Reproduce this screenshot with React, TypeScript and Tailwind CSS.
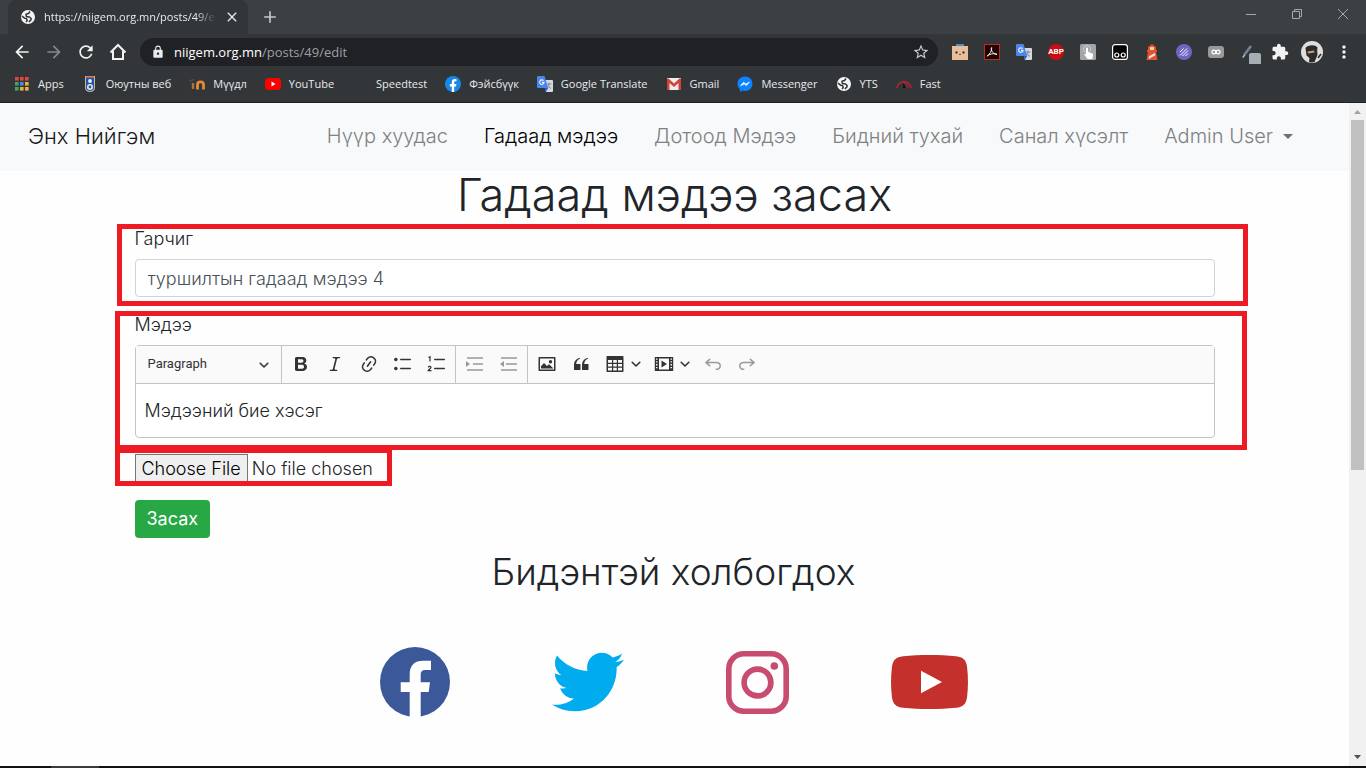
import type { ReactNode } from "react";
import {
  MdArrowBack,
  MdArrowForward,
  MdRefresh,
  MdLock,
  MdStarOutline,
  MdExtension,
  MdMoreVert,
  MdClose,
  MdAdd,
} from "react-icons/md";
import { FaTwitter } from "react-icons/fa";

const ui = "font-['Open_Sans','Noto_Sans',sans-serif]";

function TranslateIcon() {
  return (
    <svg viewBox="0 0 16 16" className="size-4" aria-hidden="true">
      <path d="M6 4h9a1 1 0 0 1 1 1v10a1 1 0 0 1-1 1H9z" fill="#d5dae0" />
      <path d="M9.5 8h5M12 6.8V8c0 2-1 3.500-2 4.200M10.800 9.500c.6 1.300 1.700 2.300 3.200 2.900" stroke="#7b8b9a" strokeWidth="1" fill="none" />
      <path d="M1 0h6.500l3.700 12H1a1 1 0 0 1-1-1V1a1 1 0 0 1 1-1z" fill="#4a86ee" />
      <path d="M7.600 12h3.600L9 15.800z" fill="#2f5fc0" />
      <path d="M6.500 4.700A2.200 2.200 0 1 0 7 6.400H5" stroke="#e8f0fe" strokeWidth="1.100" fill="none" />
    </svg>
  );
}

function AppsIcon() {
  const colors = ["#e0483e", "#e0483e", "#e0483e", "#43a563", "#4a86ee", "#e8b33a", "#43a563", "#e8b33a", "#e8b33a"];
  return (
    <svg viewBox="0 0 16 16" className="size-4" aria-hidden="true">
      {colors.map((c, i) => (
        <rect key={i} x={1 + (i % 3) * 5} y={1 + Math.floor(i / 3) * 5} width="3.600" height="3.600" fill={c} />
      ))}
    </svg>
  );
}

function CrestIcon() {
  return (
    <svg viewBox="0 0 16 16" className="size-4" aria-hidden="true">
      <path d="M3 0h10v12c0 2-2 4-5 4s-5-2-5-4z" fill="#c7b98a" />
      <path d="M4 1.500h8V12c0 1.500-1.500 3-4 3s-4-1.500-4-3z" fill="#2456a5" />
      <path d="M4 .5h8v1.200H4z" fill="#c94b3c" />
      <circle cx="8" cy="5" r="1.900" fill="#e8eefc" />
      <circle cx="8" cy="11" r="3" fill="#dfe8f5" />
      <circle cx="8" cy="11" r="1.400" fill="#2456a5" />
    </svg>
  );
}

function MoodleIcon() {
  return (
    <svg viewBox="0 0 16 16" className="size-4" aria-hidden="true" fill="none">
      <path d="M0 5l5-1.500" stroke="#5b4a3c" strokeWidth="1.600" />
      <path d="M4 13V7" stroke="#b0713a" strokeWidth="2.400" />
      <path d="M8.500 13.500V8.300c0-3.300 6-3.300 6 0v5.200" stroke="#e28b35" strokeWidth="2.800" />
    </svg>
  );
}

function YoutubeMini() {
  return (
    <svg viewBox="0 0 16 16" className="size-4" aria-hidden="true">
      <rect x="0" y="2" width="16" height="12" rx="3.500" fill="#f00" />
      <path d="M6.500 5.600v4.800L10.500 8z" fill="#fff" />
    </svg>
  );
}

function FacebookMini() {
  return (
    <svg viewBox="0 0 16 16" className="size-4" aria-hidden="true">
      <circle cx="8" cy="8" r="8" fill="#1787e8" />
      <path d="M6.800 16v-5.600h-2V8h2V6.300c0-2.100 1.200-3.200 3-3.200l1.700.1v2h-1c-1 0-1.300.6-1.300 1.300V8h2.200l-.4 2.400H9.200V16z" fill="#fff" />
    </svg>
  );
}

function GmailIcon() {
  return (
    <svg viewBox="0 0 16 16" className="size-4" aria-hidden="true">
      <rect x="1" y="2" width="14" height="12" fill="#f1eded" />
      <path d="M1 14V2.500h1.500L8 7.500l5.500-5H15V14h-2.500V7L8 11 3.500 7v7z" fill="#d0423a" />
    </svg>
  );
}

function MessengerIcon() {
  return (
    <svg viewBox="0 0 16 16" className="size-4" aria-hidden="true">
      <path d="M8 .5C3.700.5.500 3.600.5 7.700c0 2.200.9 4 2.400 5.300V16l2.500-1.400c.8.200 1.700.3 2.600.3 4.300 0 7.500-3.100 7.500-7.200S12.300.5 8 .5z" fill="#0a84ff" />
      <path d="M3.500 9.800l3-3.500L8.800 8l3.700-1.900-3.100 3.500L7.200 8z" fill="#fff" stroke="#fff" strokeWidth=".6" />
    </svg>
  );
}

function FastIcon() {
  return (
    <svg viewBox="0 0 16 16" className="size-4" aria-hidden="true" fill="none">
      <path d="M.8 12A7.300 7.300 0 0 1 15.300 12" stroke="#c2222f" strokeWidth="1.300" />
      <path d="M4 6.500a7 7 0 0 1 9 5.500M7 6.500c3 .5 4 3 4 5.500" stroke="#b3202c" strokeWidth="1" />
      <path d="M7 12l.5-5 2 5z" fill="#0b0b0b" />
    </svg>
  );
}

function GlobeIcon() {
  return (
    <svg viewBox="0 0 16 16" className="size-4 shrink-0" aria-hidden="true">
      <circle cx="8" cy="8" r="7" fill="#f4f5f6" />
      <path
        d="M10 2.500L8.500 4.500 6 5.300l.3 2.200 3.200.5 1.700 1.500-.4 1.700-2 1.600M2 7.200l2.500 2 2 .4.700 1.600-1 2"
        fill="none"
        stroke="#323639"
        strokeWidth="1.500"
        strokeLinejoin="round"
      />
    </svg>
  );
}

const bookmarks: { label: string; icon: ReactNode }[] = [
  { label: "Apps", icon: <AppsIcon /> },
  { label: "Оюутны веб", icon: <CrestIcon /> },
  { label: "Мүүдл", icon: <MoodleIcon /> },
  { label: "YouTube", icon: <YoutubeMini /> },
  { label: "Speedtest", icon: <span className="size-4" /> },
  { label: "Фэйсбүүк", icon: <FacebookMini /> },
  { label: "Google Translate", icon: <TranslateIcon /> },
  { label: "Gmail", icon: <GmailIcon /> },
  { label: "Messenger", icon: <MessengerIcon /> },
  { label: "YTS", icon: <GlobeIcon /> },
  { label: "Fast", icon: <FastIcon /> },
];

const extensions: { name: string; icon: ReactNode }[] = [
  {
    name: "Box",
    icon: (
      <svg viewBox="0 0 16 16" className="size-4">
        <rect x="4" y="0" width="8" height="3" fill="#4a90c8" />
        <rect y="2" width="16" height="14" fill="#e6bf98" />
        <path d="M3.500 7.500h2v2h-2zM10.500 7.500h2v2h-2z" fill="#222" />
        <path d="M7 10.500h2" stroke="#a33" />
      </svg>
    ),
  },
  {
    name: "Acrobat",
    icon: (
      <svg viewBox="0 0 16 16" className="size-4">
        <rect x=".5" y=".5" width="15" height="15" fill="#1e0303" stroke="#c12a20" />
        <path d="M3 12.200c2.500-1.500 5-5.500 4.800-8.700-.8 0-.8 2 0 3.500 1 2 3 3.800 5.200 3.500.4-1.200-5-1.300-8.200.4C3.500 11.500 3 12.200 3 12.200z" fill="none" stroke="#f2e9e9" />
      </svg>
    ),
  },
  { name: "Translate", icon: <TranslateIcon /> },
  {
    name: "Adblock Plus",
    icon: (
      <span className="flex size-4 items-center justify-center rounded-full bg-[#c70d12] font-['Roboto',sans-serif] text-[8px] font-bold text-white">
        ABP
      </span>
    ),
  },
  {
    name: "Clicker",
    icon: (
      <svg viewBox="0 0 16 16" className="size-4">
        <rect width="16" height="16" rx="1.500" fill="#a3a5a7" />
        <circle cx="7" cy="5" r="3.500" fill="none" stroke="#c9cbcd" />
        <path d="M6 4.500c0-1.300 2-1.300 2 0V8l4 1.200c1 .3 1.200 1 1 2L12.300 15H7.500L4.500 11c-.5-.8.3-1.500 1.500-.5z" fill="#fff" />
      </svg>
    ),
  },
  {
    name: "Monkey",
    icon: (
      <svg viewBox="0 0 16 16" className="size-4" fill="none">
        <rect x=".6" y=".6" width="14.800" height="14.800" rx="2.500" fill="#000" stroke="#fff" strokeWidth="1.200" />
        <circle cx="4.800" cy="11" r="2" stroke="#fff" strokeWidth="1.200" />
        <circle cx="11.200" cy="11" r="2" stroke="#fff" strokeWidth="1.200" />
      </svg>
    ),
  },
  {
    name: "Lighthouse",
    icon: (
      <svg viewBox="0 0 16 16" className="size-4">
        <path d="M8 0l4 3v3h1v2h-1l1.500 8h-11L4 8H3V6h1V3z" fill="#e0532b" />
        <rect x="6" y="3" width="4" height="3" fill="#f6cf9b" />
        <path d="M5 12.200l6-3.200.4 2.200L4.600 15z" fill="#f3e6dc" />
      </svg>
    ),
  },
  {
    name: "Purple",
    icon: (
      <svg viewBox="0 0 16 16" className="size-4">
        <circle cx="8" cy="8" r="8" fill="#7064c4" />
        <path d="M4 8l3.500-3.500M4 11.500L11 4.500M6.500 12L12 6.500M9.500 12l2.500-2.500" stroke="#fff" />
      </svg>
    ),
  },
  {
    name: "Loop",
    icon: (
      <svg viewBox="0 0 16 16" className="size-4" fill="none">
        <rect y="2" width="16" height="12" rx="3" fill="#98999b" />
        <circle cx="5.900" cy="8" r="1.900" stroke="#fff" strokeWidth="1.200" />
        <circle cx="10.100" cy="8" r="1.900" stroke="#fff" strokeWidth="1.200" />
      </svg>
    ),
  },
  {
    name: "Color picker",
    icon: (
      <svg viewBox="0 0 20 24" className="ml-1.5 h-6 w-5">
        <path d="M3.500 14.500L10 6" stroke="#6e8496" strokeWidth="2.600" />
        <path d="M1.800 17.500l2-3" stroke="#b9c4cc" strokeWidth="1.400" />
        <rect x="8" y="13" width="12" height="12" rx="2" fill="#a7adb5" />
      </svg>
    ),
  },
  { name: "Extensions", icon: <MdExtension className="size-[18px] text-[#f1f3f4]" /> },
  {
    name: "Profile",
    icon: (
      <svg viewBox="0 0 22 22" className="size-[22px]">
        <circle cx="11" cy="11" r="11" fill="#dedede" />
        <path d="M4.500 7c2-3 9.500-4 12-.5l-.3 3 .3 4.500-3 7c-2 .6-4 .6-5.500 0l.5-4-3-2.500z" fill="#2d2b2a" />
        <path d="M6.500 10.500l6.500-1 .6 2-6.500 1z" fill="#c49a80" />
        <path d="M17 17l3-4" stroke="#2d2b2a" strokeWidth="1.500" />
      </svg>
    ),
  },
  { name: "Menu", icon: <MdMoreVert className="size-5 text-[#f1f3f4]" /> },
];

function BrowserChrome() {
  return (
    <header className={`${ui} border-b border-[#1f2124] bg-[#323639] text-[#e8eaed]`}>
      <div className="flex h-[34px] bg-[#3c4043] pl-2">
        <div className="flex w-60 items-center gap-2 rounded-t-lg bg-[#323639] pr-2 pl-3 text-[11px]">
          <GlobeIcon />
          <span className="min-w-0 flex-1 overflow-hidden whitespace-nowrap [mask-image:linear-gradient(to_right,#000_88%,transparent)]">
            https://niigem.org.mn/posts/49/edit
          </span>
          <button aria-label="Close tab">
            <MdClose className="size-4" />
          </button>
        </div>
        <button aria-label="New tab" className="ml-3">
          <MdAdd className="size-5 text-[#c4c7ca]" />
        </button>
        <div className="ml-auto flex pb-1.5 text-[#a5a8aa]">
          <button aria-label="Minimize" className="flex w-[46px] items-center justify-center">
            <svg viewBox="0 0 10 10" className="size-2.5" fill="none" stroke="currentColor">
              <path d="M0 5.500h10" />
            </svg>
          </button>
          <button aria-label="Restore" className="flex w-[46px] items-center justify-center">
            <svg viewBox="0 0 10 10" className="size-2.5" fill="none" stroke="currentColor">
              <path d="M.5 2.500h7v7h-7zM2.500 2.500v-2h7v7h-2" />
            </svg>
          </button>
          <button aria-label="Close" className="flex w-[46px] items-center justify-center">
            <svg viewBox="0 0 10 10" className="size-2.5" fill="none" stroke="currentColor">
              <path d="M0 0l10 10M10 0L0 10" />
            </svg>
          </button>
        </div>
      </div>

      <div className="flex h-9 items-center px-1.5">
        <button aria-label="Back" className="flex w-8 justify-center">
          <MdArrowBack className="size-5 text-[#f1f3f4]" />
        </button>
        <button aria-label="Forward" className="flex w-8 justify-center">
          <MdArrowForward className="size-5 text-[#85888b]" />
        </button>
        <button aria-label="Reload" className="flex w-8 justify-center">
          <MdRefresh className="size-5 text-[#f1f3f4]" />
        </button>
        <button aria-label="Home" className="flex w-8 justify-center">
          <svg viewBox="0 0 20 20" className="size-5" fill="none" stroke="#f1f3f4" strokeWidth="2">
            <path d="M2.500 10.500L10 3l7.500 7.500M5 9v8h10V9" />
          </svg>
        </button>
        <div className="mx-1.5 flex h-7 flex-1 items-center rounded-full bg-[#202124] pr-2 pl-[11px]">
          <MdLock className="size-3.5 shrink-0 text-[#e8eaed]" />
          <span className="flex-1 pt-px pl-[9px] text-[13px] whitespace-nowrap text-[#9aa0a6]">
            <span className="text-white">niigem.org.mn</span>/posts/49/edit
          </span>
          <button aria-label="Bookmark this page">
            <MdStarOutline className="size-[18px] text-[#c4c7ca]" />
          </button>
        </div>
        {extensions.map((e) => (
          <button key={e.name} aria-label={e.name} className="flex w-8 items-center justify-center">
            {e.icon}
          </button>
        ))}
      </div>

      <nav aria-label="Bookmarks" className="flex h-8 items-center gap-[18px] pb-1 pl-3.5 text-[11px]">
        {bookmarks.map((b) => (
          <a key={b.label} href="#" className="flex items-center gap-2 whitespace-nowrap">
            {b.icon}
            {b.label}
          </a>
        ))}
      </nav>
    </header>
  );
}

const navLinks = ["Нүүр хуудас", "Гадаад мэдээ", "Дотоод Мэдээ", "Бидний тухай", "Санал хүсэлт"];

function SiteNav() {
  return (
    <nav className="flex h-[68px] items-center justify-between bg-[#f8f9fa] pr-14 pb-0.5 pl-7">
      <a href="#" className="text-[22px] text-[#1a1a1a]">
        Энх Нийгэм
      </a>
      <div className="flex items-center gap-9 text-xl text-[#808182]">
        {navLinks.map((l) => (
          <a key={l} href="#" className={l === "Гадаад мэдээ" ? "text-black" : ""}>
            {l}
          </a>
        ))}
        <button className="flex items-center gap-2.5">
          Admin User
          <svg viewBox="0 0 10 5" className="w-2.5" fill="#6f7071">
            <path d="M0 0h10L5 5z" />
          </svg>
        </button>
      </div>
    </nav>
  );
}

function Svg({ children }: { children: ReactNode }) {
  return (
    <svg viewBox="0 0 20 20" className="size-5" fill="currentColor" aria-hidden="true">
      {children}
    </svg>
  );
}

function Chevron() {
  return (
    <svg viewBox="0 0 10 10" className="size-2.5" fill="none" stroke="#333" strokeWidth="1.600" strokeLinecap="round" strokeLinejoin="round" aria-hidden="true">
      <path d="M1.200 3.300L5 7l3.800-3.700" />
    </svg>
  );
}

function Tool({ label, disabled, menu, children }: { label: string; disabled?: boolean; menu?: boolean; children: ReactNode }) {
  return (
    <button
      type="button"
      aria-label={label}
      disabled={disabled}
      className={`flex items-center pb-0.5 pl-2 ${menu ? "w-[49px] gap-1.5" : "w-[34px]"} ${disabled ? "text-[#999]" : "text-[#333]"}`}
    >
      <Svg>{children}</Svg>
      {menu && <Chevron />}
    </button>
  );
}

const undoPath =
  "M5.042 9.367l2.189 1.837a.75.75 0 0 1-.965 1.149l-3.788-3.180a.747.747 0 0 1-.210-.284.750.750 0 0 1 .170-.945L6.230 4.762a.750.750 0 1 1 .964 1.150L4.863 7.866h8.917A.750.750 0 0 1 14 7.900a4 4 0 1 1-1.477 7.718l.344-1.489a2.500 2.500 0 1 0 1.094-4.730l.008-.032H5.042z";

function Editor() {
  const group = "flex border-l border-[#c4c4c4] pr-0.5 pl-px";
  return (
    <div className="rounded-sm border border-[#c4c4c4] bg-white">
      <div role="toolbar" aria-label="Editor toolbar" className="flex h-[38px] border-b border-[#c4c4c4] bg-[#fafafa]">
        <div className="relative flex w-[145px] items-center">
          <select
            aria-label="Heading"
            className="h-full w-full appearance-none bg-transparent pl-3 font-['Roboto',sans-serif] text-[13px] font-normal text-[#333]"
          >
            <option>Paragraph</option>
          </select>
          <span className="pointer-events-none absolute right-3">
            <Chevron />
          </span>
        </div>
        <div className={group}>
          <Tool label="Bold">
            <path d="M10.187 17H5.773c-.637 0-1.092-.138-1.364-.415-.273-.277-.409-.718-.409-1.323V4.738c0-.617.14-1.062.419-1.332.279-.27.73-.406 1.354-.406h4.680c.69 0 1.288.041 1.793.124.506.083.96.242 1.360.478.341.197.644.447.906.75a3.262 3.262 0 0 1 .808 2.162c0 1.401-.722 2.426-2.167 3.075C15.050 10.175 16 11.315 16 13.010a3.756 3.756 0 0 1-2.296 3.504 6.100 6.100 0 0 1-1.517.377c-.571.073-1.238.11-2 .11zm-.217-6.217H7v4.087h3.069c1.977 0 2.965-.69 2.965-2.072 0-.707-.256-1.220-.768-1.537-.512-.319-1.277-.478-2.296-.478zM7 5.130v3.619h2.606c.729 0 1.292-.067 1.690-.2a1.600 1.600 0 0 0 .91-.765c.165-.267.247-.566.247-.897 0-.707-.26-1.176-.778-1.409-.519-.232-1.310-.348-2.375-.348H7z" />
          </Tool>
          <Tool label="Italic">
            <path d="M9.586 14.633l.021.004c-.036.335.095.655.393.962.082.083.173.15.274.201h1.474a.6.6 0 1 1 0 1.200H5.304a.6.6 0 0 1 0-1.200h1.150c.474-.07.809-.182 1.005-.334.157-.122.291-.32.404-.597l2.416-9.550a1.053 1.053 0 0 0-.281-.823 1.120 1.120 0 0 0-.442-.296H8.150a.6.6 0 0 1 0-1.200h6.443a.6.6 0 1 1 0 1.200h-1.195c-.376.056-.65.155-.823.296-.215.175-.423.439-.623.79l-2.366 9.347z" />
          </Tool>
          <Tool label="Link">
            <path d="M11.077 15l.991-1.416a.75.75 0 1 1 1.229.86l-1.148 1.640a.748.748 0 0 1-.217.206 5.251 5.251 0 0 1-8.503-5.955.741.741 0 0 1 .12-.274l1.147-1.639a.75.75 0 1 1 1.228.86L4.933 10.700l.006.003a3.750 3.750 0 0 0 6.132 4.294l.006.004zm5.494-5.335a.748.748 0 0 1-.12.274l-1.147 1.639a.75.75 0 1 1-1.228-.86l.86-1.230a3.750 3.750 0 0 0-6.144-4.301l-.86 1.229a.75.75 0 0 1-1.229-.86l1.148-1.640a.748.748 0 0 1 .217-.206 5.251 5.251 0 0 1 8.503 5.955zm-4.563-2.532a.75.75 0 0 1 .184 1.045l-3.155 4.505a.75.75 0 1 1-1.229-.86l3.155-4.506a.75.75 0 0 1 1.045-.184z" />
          </Tool>
          <Tool label="Bulleted list">
            <circle cx="2.800" cy="5.500" r="1.750" />
            <circle cx="2.800" cy="14.500" r="1.750" />
            <rect x="7" y="4.750" width="11" height="1.500" rx=".75" />
            <rect x="7" y="13.750" width="11" height="1.500" rx=".75" />
          </Tool>
          <Tool label="Numbered list">
            <rect x="7" y="4.750" width="11" height="1.500" rx=".75" />
            <rect x="7" y="13.750" width="11" height="1.500" rx=".75" />
            <path d="M1.500 3.500L3 2.700V7.500M1.300 13.300c.3-1.200 2.900-1.200 2.700.2-.1.900-2 1.500-2.700 3.100h3.200" fill="none" stroke="currentColor" strokeWidth="1.200" />
          </Tool>
        </div>
        <div className={group}>
          <Tool label="Increase indent" disabled>
            <path d="M2 3.250h16v1.500H2zM8 9.250h10v1.500H8zM2 15.250h16v1.500H2zM1 7v6l4-3z" />
          </Tool>
          <Tool label="Decrease indent" disabled>
            <path d="M2 3.250h16v1.500H2zM7 9.250h11v1.500H7zM2 15.250h16v1.500H2zM5 7v6l-4-3z" />
          </Tool>
        </div>
        <div className={group}>
          <Tool label="Insert image">
            <path fillRule="evenodd" d="M2.500 3h15c.6 0 1 .4 1 1v12c0 .6-.4 1-1 1h-15c-.6 0-1-.4-1-1V4c0-.6.4-1 1-1zM3 4.500v11h14v-11zM4 14.500v-2.200l3-3.300 3 3 2-1.700 4 3.700v.5zM13.500 6a1.700 1.700 0 1 1 0 3.400 1.700 1.700 0 0 1 0-3.400z" />
          </Tool>
          <Tool label="Block quote">
            <path d="M3 10.423a6.500 6.500 0 0 1 6.056-6.408l.038.670C6.448 5.423 5.354 7.663 5.220 10H9c.552 0 .5.432.5.986v4.511c0 .554-.448.503-1 .503h-5c-.552 0-.5-.449-.5-1.003v-4.574zm8 0a6.500 6.500 0 0 1 6.056-6.408l.038.670c-2.646.739-3.740 2.979-3.873 5.315H17c.552 0 .5.432.5.986v4.511c0 .554-.448.503-1 .503h-5c-.552 0-.5-.449-.5-1.003v-4.574z" />
          </Tool>
          <Tool label="Insert table" menu>
            <path fillRule="evenodd" d="M2.500 2h15c.6 0 1 .4 1 1v14c0 .6-.4 1-1 1h-15c-.6 0-1-.4-1-1V3c0-.6.4-1 1-1zM3 6v2.700h4V6zM8.200 6v2.700h3.600V6zM13 6v2.700h4V6zM3 9.900v2.700h4V9.900zM8.200 9.900v2.700h3.600V9.900zM13 9.900v2.700h4V9.900zM3 13.800v2.700h4v-2.700zM8.200 13.800v2.700h3.600v-2.700zM13 13.800v2.700h4v-2.700z" />
          </Tool>
          <Tool label="Insert media" menu>
            <path fillRule="evenodd" d="M.8 3h18.400v14H.8zM5 4.500v11h10v-11zM2 4.500v1.300h1.500V4.500zM2 7.300v1.300h1.500V7.300zM2 10.100v1.300h1.500v-1.300zM2 12.900v1.300h1.500v-1.300zM16.500 4.500v1.300H18V4.500zM16.500 7.300v1.300H18V7.300zM16.500 10.100v1.300H18v-1.300zM16.500 12.900v1.300H18v-1.300zM7.500 6.500v7L13 10z" />
          </Tool>
          <Tool label="Undo" disabled>
            <path d={undoPath} />
          </Tool>
          <Tool label="Redo" disabled>
            <g transform="matrix(-1 0 0 1 20 0)">
              <path d={undoPath} />
            </g>
          </Tool>
        </div>
      </div>
      <div contentEditable suppressContentEditableWarning role="textbox" aria-label="Мэдээ" className="px-[9px] py-[14px] leading-[25px] text-[#212529]">
        Мэдээний бие хэсэг
      </div>
    </div>
  );
}

function Highlight({ className }: { className: string }) {
  return <div aria-hidden="true" className={`pointer-events-none absolute border-5 border-[#ed1c24] ${className}`} />;
}

function SocialLinks() {
  return (
    <section className="pt-[15px] pr-0.5">
      <h2 className="text-center text-[37px] leading-[38px]">Бидэнтэй холбогдох</h2>
      <div className="mt-[55px] flex items-center justify-center gap-[102px]">
        <a href="#" aria-label="Facebook">
          <svg viewBox="0 0 70 70" className="size-[70px]">
            <circle cx="35" cy="35" r="35" fill="#3b5998" />
            <path d="M29.700 70V45h-9v-9.700h9V27c0-9 5.300-13.300 13.300-13.300h8V23h-6c-3 0-4.300 1.500-4.300 4.500v7.800H50L48.700 45h-8v25z" fill="#fff" />
          </svg>
        </a>
        <a href="#" aria-label="Twitter">
          <FaTwitter className="size-[72px] text-[#00aced]" />
        </a>
        <a href="#" aria-label="Instagram">
          <svg viewBox="0 0 63 63" className="size-[63px]" fill="none" stroke="#c84b70" strokeWidth="5.600">
            <rect x="2.800" y="2.800" width="57.400" height="57.400" rx="15" />
            <circle cx="31.500" cy="31.500" r="13.400" />
            <circle cx="48.300" cy="15" r="3.800" fill="#c84b70" stroke="none" />
          </svg>
        </a>
        <a href="#" aria-label="YouTube">
          <svg viewBox="0 0 77 54" className="h-[54px] w-[77px]">
            <path d="M12 1.200C28-.400 49-.400 65 1.200c7 .7 10 3.800 11 10.300 1.300 10 1.300 21 0 31-1 6.500-4 9.600-11 10.300-16 1.600-37 1.600-53 0-7-.7-10-3.800-11-10.300-1.300-10-1.300-21 0-31C2 5 5 1.900 12 1.200z" fill="#c4302b" />
            <path d="M30 15.700v22.600L51 27z" fill="#fff" />
          </svg>
        </a>
      </div>
    </section>
  );
}

export default function App() {
  return (
    <div className="flex min-h-screen flex-col">
      <BrowserChrome />
      <div className="flex flex-1 bg-[#fefefe]">
        <div className="min-w-0 flex-1 font-['Inter','Noto_Sans',sans-serif] font-light text-[#212529]" lang="mn">
          <SiteNav />
          <main className="mx-auto max-w-[1080px] text-lg">
            <h1 className="text-center text-[45px] leading-[48px]">Гадаад мэдээ засах</h1>
            <form className="mt-2 flex flex-col items-start gap-4">
              <div className="relative flex w-full flex-col gap-2">
                <label htmlFor="title" className="leading-6">
                  Гарчиг
                </label>
                <input
                  id="title"
                  type="text"
                  defaultValue="туршилтын гадаад мэдээ 4"
                  className="h-[38px] w-full rounded border border-[#ced4da] bg-white px-3 text-[#495057]"
                />
                <Highlight className="-top-[3px] -right-[33px] -bottom-[9px] -left-[18px]" />
              </div>
              <div className="relative flex w-full flex-col gap-2">
                <span className="leading-6">Мэдээ</span>
                <Editor />
                <Highlight className="-top-0.5 -right-8 -bottom-3 -left-5" />
              </div>
              <div className="relative h-[30px]">
                <input
                  type="file"
                  aria-label="Файл"
                  className="h-[30px] w-60 file:mr-1 file:h-[30px] file:border file:border-[#767676] file:bg-[#efefef] file:px-1.5 file:font-light file:text-black"
                />
                <Highlight className="-top-1.5 -right-[17px] -bottom-0.5 -left-5" />
              </div>
              <button type="submit" className="h-[38px] rounded bg-[#28a745] px-3 font-normal text-white">
                Засах
              </button>
            </form>
            <SocialLinks />
          </main>
        </div>
        <div aria-hidden="true" className="flex w-[17px] flex-col items-center bg-[#f1f1f1]">
          <svg viewBox="0 0 17 17" className="size-[17px]">
            <path d="M5 11h7L8.500 7z" fill="#a3a3a3" />
          </svg>
          <div className="w-[13px] flex-1">
            <div className="h-[350px] bg-[#c1c1c1]" />
          </div>
          <svg viewBox="0 0 17 17" className="size-[17px]">
            <path d="M5 6h7l-3.500 4z" fill="#505050" />
          </svg>
        </div>
      </div>
      <footer className="h-0.5 bg-[#101214] pl-[51px]">
        <div className="h-0.5 w-12 bg-[#3a3c3d]" />
      </footer>
    </div>
  );
}
